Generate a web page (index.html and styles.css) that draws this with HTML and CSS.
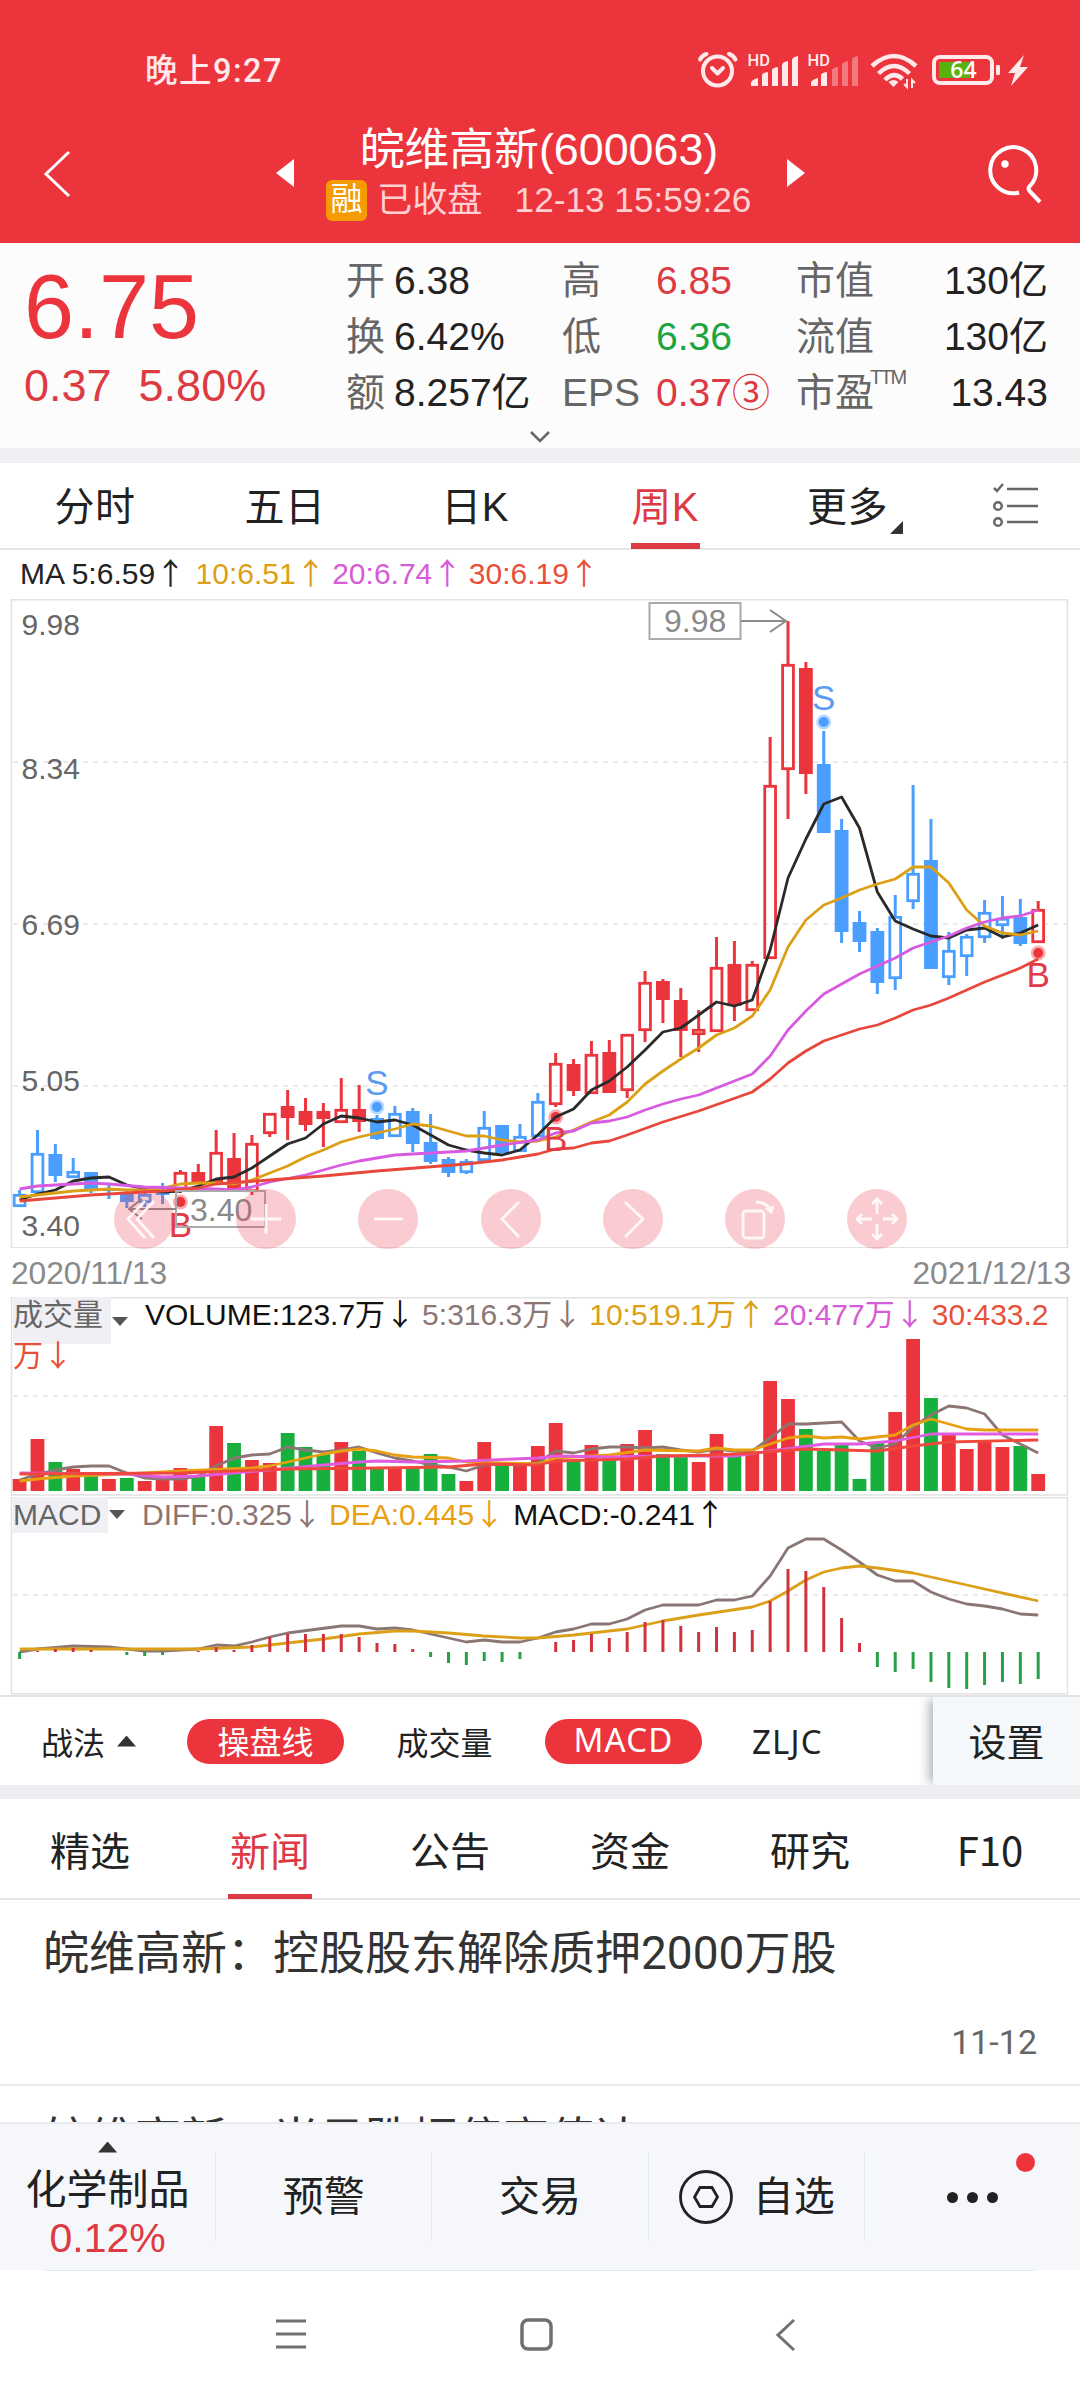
FILE: index.html
```html
<!DOCTYPE html>
<html lang="zh-CN">
<head>
    <meta charset="UTF-8">
    <meta name="viewport" content="width=device-width, initial-scale=1.0">
    <title>皖维高新(600063)</title>
    <link rel="stylesheet" href="styles.css">
</head>
<body>
    <header class="header">
        <div class="status-bar">
            <span class="clock">晚上9:27</span>
            <svg class="status-icons" width="340" height="44" viewBox="690 48 340 44">
                <!-- alarm -->
                <g fill="none" stroke="#ffe9ea" stroke-width="4" stroke-linecap="round" stroke-linejoin="round">
                    <circle cx="717.5" cy="71" r="14.5"/>
                    <path d="M712 68l5.5 5.5L723 68"/>
                    <path d="M700 59.500q2-4 6.500-5.500M729 54q4.500 1.500 6.500 5.500"/>
                </g>
                <!-- signal 1 -->
                <text class="hd" x="747.500" y="66">HD</text>
                <g fill="#ffe9ea">
                    <path d="M751 86v-3q0-3 7-5v8zM762 86V75q0-2 6-3v14zM772 86V70q0-2 6-3v19zM782 86V65q0-3 6-4v25zM792 86V60q0-3 6-4v30z"/>
                </g>
                <!-- signal 2 -->
                <text class="hd" x="807.500" y="66">HD</text>
                <path fill="#ffe9ea" d="M811 86v-3q0-3 7-5v8zM821 86V75q0-2 6-3v14z"/>
                <path fill="#ffe9ea" opacity=".38" d="M832 86V70q0-2 6-3v19zM842 86V65q0-3 6-4v25zM852 86V60q0-3 6-4v30z"/>
                <!-- wifi -->
                <g fill="none" stroke="#ffe9ea" stroke-width="4.500">
                    <path d="M872 66q22-20 44 0M878.500 73.500q15.500-15 31 0M885 80q9-9 17.500 -1"/>
                </g>
                <path fill="#ffe9ea" d="M893.500 87l-5-5q5-4 10 0z"/>
                <path stroke="#ffe9ea" stroke-width="2" fill="none" d="M907 79v8l-3-3M912 88v-8l3 3"/>
                <!-- battery -->
                <rect x="934" y="57" width="58" height="26" rx="6" fill="none" stroke="#ffe9ea" stroke-width="4"/>
                <rect x="939" y="62" width="31" height="16" fill="#55b30c"/>
                <rect x="996" y="65" width="4" height="10" rx="1" fill="#ffe9ea"/>
                <text class="battery-text" x="963.500" y="78">64</text>
                <path fill="#ffe9ea" d="M1024 55l-16 18h7l-4 13 17-19h-8z"/>
            </svg>
        </div>
        <div class="title-bar">
            <svg class="back" width="30" height="52" viewBox="0 0 30 52"><path d="M27 4L4 26l23 22" fill="none" stroke="#fff" stroke-width="3"/></svg>
            <svg class="arrow" width="18" height="28" viewBox="0 0 18 28"><path d="M18 0v28L0 14z" fill="#fff"/></svg>
            <div class="stock">
                <h1 class="stock-name">皖维高新(600063)</h1>
                <p class="stock-state"><span class="tag">融</span><span>已收盘</span><span class="stamp">12-13 15:59:26</span></p>
            </div>
            <svg class="arrow" width="18" height="28" viewBox="0 0 18 28"><path d="M0 0v28l18-14z" fill="#fff"/></svg>
            <svg class="search" width="56" height="56" viewBox="0 0 56 56">
                <path d="M32 47.500A23 23 0 1 1 42.500 41.500Q40 44 44 47.500L53 57" fill="none" stroke="#fff" stroke-width="4"/>
                <circle cx="18" cy="19" r="3.700" fill="#fff"/>
            </svg>
        </div>
    </header>

    <section class="quote">
        <div class="price">
            <div class="price-now">6.75</div>
            <div class="price-change"><span>0.37</span><span>5.80%</span></div>
        </div>
        <div class="figures">
            <span class="label">开</span><span>6.38</span>
            <span class="label">高</span><span class="up">6.85</span>
            <span class="label">市值</span><span class="right">130亿</span>
            <span class="label">换</span><span>6.42%</span>
            <span class="label">低</span><span class="down">6.36</span>
            <span class="label">流值</span><span class="right">130亿</span>
            <span class="label">额</span><span>8.257亿</span>
            <span class="label">EPS</span><span class="up">0.37<span class="circled">③</span></span>
            <span class="label">市盈<sup>TTM</sup></span><span class="right">13.43</span>
        </div>
        <svg class="expand" width="22" height="14" viewBox="0 0 22 14"><path d="M2 2l9 9 9-9" fill="none" stroke="#666" stroke-width="2.500"/></svg>
    </section>

    <nav class="periods">
        <a>分时</a>
        <a>五日</a>
        <a>日K</a>
        <a class="active">周K</a>
        <a class="more">更多</a>
        <svg class="list-icon" width="48" height="46" viewBox="0 0 48 46" fill="none" stroke="#666" stroke-width="2.500">
            <path d="M2 5l3 3 6-7M15 6h31M15 23h31M15 39h31"/>
            <circle cx="6" cy="23" r="3.800"/>
            <circle cx="6" cy="39" r="3.800"/>
        </svg>
    </nav>

    <div class="ma-row">
        <span class="ma5">MA 5:6.59<i class="ar">↑</i></span>
        <span class="ma10">10:6.51<i class="ar">↑</i></span>
        <span class="ma20">20:6.74<i class="ar">↑</i></span>
        <span class="ma30">30:6.19<i class="ar">↑</i></span>
    </div>

    <section class="pane k-pane">
        <svg id="k-chart" width="1080" height="649" viewBox="0 599 1080 649"></svg>
        <div class="tools">
            <button><svg viewBox="0 0 60 60"><path d="M31 12L14 30l17 19M40 12L23 30l17 19"/></svg></button>
            <button><svg viewBox="0 0 60 60"><path d="M15 30h30M30 15v30"/></svg></button>
            <button><svg viewBox="0 0 60 60"><path d="M16 30h29"/></svg></button>
            <button><svg viewBox="0 0 60 60"><path d="M38 13L21 30l17 18"/></svg></button>
            <button><svg viewBox="0 0 60 60"><path d="M22 13l18 17-18 18"/></svg></button>
            <button><svg viewBox="0 0 60 60"><rect x="18" y="22" width="21" height="27" rx="3"/><path d="M31 13q11 0 15 9M41 19l5 4 2-6"/></svg></button>
            <button><svg viewBox="0 0 60 60"><path d="M30 25V11M25 15l5-5 5 5M30 35v14M25 45l5 5 5-5M25 30H11M15 25l-5 5 5 5M36 30h14M45 25l5 5-5 5"/></svg></button>
        </div>
    </section>
    <div class="dates"><span>2020/11/13</span><span>2021/12/13</span></div>

    <section class="pane vol-pane">
        <svg id="vol-chart" width="1080" height="200" viewBox="0 1297 1080 200"></svg>
        <div class="legend">
            <span class="picker">成交量</span><b class="caret"></b>
            <span class="v0">VOLUME:123.7万<i class="ar">↓</i></span>
            <span class="v5">5:316.3万<i class="ar">↓</i></span>
            <span class="ma10">10:519.1万<i class="ar">↑</i></span>
            <span class="ma20">20:477万<i class="ar">↓</i></span>
            <span class="ma30">30:433.2</span>
        </div>
        <div class="legend-wrap ma30">万<i class="ar">↓</i></div>
    </section>

    <section class="pane macd-pane">
        <svg id="macd-chart" width="1080" height="198" viewBox="0 1497 1080 198"></svg>
        <div class="legend">
            <span class="picker">MACD</span><b class="caret"></b>
            <span class="v5">DIFF:0.325<i class="ar">↓</i></span>
            <span class="dea">DEA:0.445<i class="ar">↓</i></span>
            <span class="v0">MACD:-0.241<i class="ar">↑</i></span>
        </div>
    </section>

    <div class="indicators">
        <span class="tactics">战法</span>
        <span class="pill">操盘线</span>
        <span class="plain">成交量</span>
        <span class="pill latin">MACD</span>
        <span class="plain latin last">ZLJC</span>
        <span class="settings">设置</span>
    </div>

    <nav class="info-tabs">
        <a>精选</a>
        <a class="active">新闻</a>
        <a>公告</a>
        <a>资金</a>
        <a>研究</a>
        <a>F10</a>
    </nav>

    <main class="news">
        <article>
            <h2>皖维高新：控股股东解除质押2000万股</h2>
            <time>11-12</time>
        </article>
        <article>
            <h2>皖维高新：当日跌幅偏离值达</h2>
        </article>
    </main>

    <footer class="actions">
        <div class="action sector">
            <i class="tri"></i>
            <span>化学制品</span>
            <span class="pct">0.12%</span>
        </div>
        <div class="action">预警</div>
        <div class="action">交易</div>
        <div class="action watch">
            <svg width="56" height="56" viewBox="0 0 56 56" fill="none" stroke="#222" stroke-width="2.800">
                <circle cx="28" cy="28" r="25.500"/>
                <path d="M22 18.500h12l5.500 9.500-5.500 9.500H22L16.500 28z"/>
            </svg>
            自选
        </div>
        <div class="action dots">
            <i></i><i></i><i></i>
            <b class="badge"></b>
        </div>
    </footer>

    <div class="system-nav">
        <svg width="32" height="34" viewBox="0 0 32 34"><path d="M1 4h30M1 17h30M1 30h30" stroke="#707070" stroke-width="3"/></svg>
        <svg class="home" width="36" height="36" viewBox="0 0 36 36"><rect x="3" y="3" width="29" height="29" rx="6" fill="none" stroke="#707070" stroke-width="3.500"/></svg>
        <svg width="22" height="36" viewBox="0 0 22 36"><path d="M19 3L3 18l16 15" fill="none" stroke="#707070" stroke-width="3"/></svg>
    </div>

    <script src="charts.js"></script>
</body>
</html>
```
FILE: styles.css
```css
* {
    box-sizing: border-box;
    margin: 0;
    padding: 0;
}

body {
    width: 1080px;
    height: 2400px;
    overflow: hidden;
    background: #fff;
    color: #222;
    font-family: "Liberation Sans", "Noto Sans CJK SC", sans-serif;
    display: flex;
    flex-direction: column;
}

i {
    font-style: normal;
}

svg {
    display: block;
    flex: none;
}

/* header */
.header {
    height: 243px;
    background: #eb343c;
    color: #fff;
    flex: none;
}

.status-bar {
    height: 100px;
    padding: 48px 50px 0 145px;
    display: flex;
    justify-content: space-between;
}

.clock {
    font: 500 32.5px/47px Roboto, "Noto Sans CJK SC", sans-serif;
    letter-spacing: 1.5px;
    color: #ffe9ea;
}

.hd {
    font: 500 16.5px Roboto, sans-serif;
    fill: #ffe9ea;
}

.battery-text {
    font: 600 23px "Open Sans", sans-serif;
    fill: #fff;
    text-anchor: middle;
}

.title-bar {
    height: 143px;
    padding: 18px 36px 0 42px;
    display: flex;
    align-items: flex-start;
}

.back {
    margin-top: 30px;
}

.title-bar .arrow {
    margin: 41px 0 0 204px;
}

.stock {
    width: 432px;
    margin: 1px 32px 0 29px;
    text-align: center;
    white-space: nowrap;
}

.title-bar .stock + .arrow {
    margin-left: 0;
}

.stock-name {
    font-size: 44.8px;
    font-weight: 400;
    line-height: 60px;
}

.stock-state {
    display: flex;
    align-items: center;
    line-height: 42px;
    font-size: 35.2px;
    color: #ffd0d2;
    margin-left: 3px;
}

.tag {
    width: 41px;
    height: 41px;
    margin-right: 10px;
    border-radius: 6px;
    background: #f59a00;
    color: #fff;
    font-size: 32px;
    line-height: 39px;
}

.stamp {
    margin-left: 32px;
}

.search {
    margin: 27px 0 0 182px;
    overflow: visible;
}

/* quote */
.quote {
    height: 220px;
    flex: none;
    background: #fcfcfc;
    border-bottom: 15px solid #eeeef3;
    display: grid;
    grid-template-columns: 346px 1fr;
    grid-template-rows: 185px auto;
}

.price {
    padding: 11px 0 0 24px;
    color: #eb343c;
}

.price-now {
    font-size: 90px;
    line-height: 106px;
}

.price-change {
    display: flex;
    gap: 27px;
    font-size: 45px;
    line-height: 52px;
    color: #dd3a44;
}

.figures {
    display: grid;
    grid-template-columns: 48px 168px 94px 140px 99px 153px;
    grid-template-rows: repeat(3, 56px);
    padding-top: 10px;
    font-size: 39px;
    line-height: 56px;
    white-space: nowrap;
}

.label {
    color: #666;
}

.label sup {
    font-size: 20px;
    line-height: 20px;
    vertical-align: 22px;
    margin-left: -4px;
    letter-spacing: -2px;
}

.circled {
    font-size: 38px;
}

.up {
    color: #dd3a44;
}

.down {
    color: #1da541;
}

.right {
    text-align: right;
}

.expand {
    grid-column: 1 / 3;
    justify-self: center;
    margin-top: 2px;
}

/* period tabs */
.periods {
    height: 87px;
    flex: none;
    display: flex;
    border-bottom: 2px solid #e6e6e6;
    font-size: 40px;
    line-height: 89px;
}

.periods a {
    width: 190px;
    height: 85px;
    text-align: center;
    display: flex;
    justify-content: center;
    letter-spacing: 0.5px;
}

.periods .active {
    color: #dd3a44;
}

.periods .active::after {
    content: "";
    position: absolute;
    width: 69px;
    height: 6px;
    margin-top: 80px;
    background: #dd3a44;
}

.periods .more {
    justify-content: flex-start;
    padding-left: 47px;
}

.periods .more::after {
    content: "";
    align-self: flex-end;
    width: 13px;
    height: 13px;
    background: #333;
    clip-path: polygon(100% 0, 100% 100%, 0 100%);
    margin: 0 0 14px 2px;
}

.list-icon {
    margin: 20px 0 0 42px;
}

/* moving average legend */
.ma-row {
    height: 49px;
    flex: none;
    padding-left: 20px;
    display: flex;
    gap: 9.5px;
    font-size: 30px;
    line-height: 48px;
}

.ar {
    display: inline-block;
    width: 27px;
    text-align: center;
    font-family: "Noto Sans CJK SC", sans-serif;
    line-height: 1;
}

.ma-row .ma5 .ar { width: 31px; }

.ma5 { color: #222; }
.ma10 { color: #dc9f16; }
.ma20 { color: #d65bd6; }
.ma30 { color: #e8503a; }
.v0 { color: #111; }
.v5 { color: #8c7673; }
.dea { color: #e8a010; }

/* chart panes */
.pane {
    position: relative;
    flex: none;
}

.k-pane { height: 649px; }
.vol-pane { height: 200px; }
.macd-pane { height: 198px; }

.pane > svg {
    position: absolute;
    left: 0;
    top: 0;
}

.frame {
    fill: none;
    stroke: #e2e2e2;
    stroke-width: 1.5;
}

.grid {
    stroke: #e4e4e4;
    stroke-width: 1.5;
    stroke-dasharray: 5 5;
}

.axis {
    font-size: 30px;
    fill: #666;
}

.note {
    font-size: 32px;
    fill: #8a8a8a;
}

.mark {
    font-size: 35px;
    text-anchor: middle;
}

.line {
    fill: none;
    stroke-width: 2.8;
    stroke-linejoin: round;
}

.tools {
    position: absolute;
    left: 114px;
    bottom: -1px;
    display: flex;
    gap: 62.2px;
}

.tools button {
    width: 60px;
    height: 60px;
    border: 0;
    border-radius: 50%;
    background: rgba(236, 70, 90, 0.28);
}

.tools svg {
    width: 60px;
    height: 60px;
    fill: none;
    stroke: #fff;
    stroke-opacity: 0.85;
    stroke-width: 2.8;
}

.dates {
    height: 49px;
    flex: none;
    display: flex;
    justify-content: space-between;
    padding: 0 9px 0 11px;
    font-size: 31.7px;
    line-height: 50px;
    color: #8a8a8a;
}

.legend {
    position: relative;
    display: flex;
    padding-left: 13px;
    font-size: 30px;
    line-height: 36px;
    white-space: nowrap;
}

.legend > span {
    margin-right: 10px;
}

.legend > .picker {
    color: #666;
    background: #efeff4;
    width: 98px;
    height: 47px;
    margin-right: 1px;
}

.caret {
    width: 16px;
    height: 9px;
    margin: 20px 17px 0 0;
    background: #555;
    clip-path: polygon(0 0, 100% 0, 50% 100%);
}

.legend-wrap {
    position: relative;
    padding-left: 13px;
    margin-top: -6px;
    font-size: 30px;
    line-height: 36px;
}

.macd-pane .picker {
    height: 36px;
    width: 95px;
}

.macd-pane .caret {
    margin-top: 13px;
}

.macd-pane .legend > span + span {
    margin-right: 12px;
}

/* indicator bar */
.indicators {
    height: 104px;
    flex: none;
    display: flex;
    align-items: center;
    border-top: 2px solid #e2e2e2;
    border-bottom: 14px solid #eeeef2;
    padding-left: 41px;
    font-size: 32px;
    line-height: 43px;
    font-family: "Noto Sans CJK SC", sans-serif;
}

.tactics {
    width: 146px;
    display: flex;
    align-items: center;
}

.tactics::after,
.tri {
    content: "";
    width: 19px;
    height: 11px;
    margin-left: 12px;
    background: #333;
    clip-path: polygon(50% 0, 100% 100%, 0 100%);
}

.pill {
    width: 157px;
    height: 45px;
    border-radius: 23px;
    background: #eb343c;
    color: #fff;
    text-align: center;
    line-height: 42px;
}

.plain {
    width: 201px;
    text-align: center;
}

.latin {
    font-family: "Noto Sans", sans-serif;
    font-size: 33px;
    letter-spacing: 1.2px;
}

.plain.last {
    width: 231px;
    padding-left: 50px;
    text-align: left;
}

.settings {
    flex: 1;
    align-self: stretch;
    background: #f5f8fb;
    box-shadow: -6px 0 10px -2px rgba(0, 0, 0, 0.3);
    clip-path: inset(0 0 0 -20px);
    font-size: 38px;
    line-height: 85px;
    text-align: center;
}

/* info tabs */
.info-tabs {
    height: 101px;
    flex: none;
    display: flex;
    border-bottom: 2px solid #e6e6e6;
    font: 40px/101px "Noto Sans CJK SC", sans-serif;
}

.info-tabs a {
    width: 180px;
    display: flex;
    justify-content: center;
}

.info-tabs .active {
    color: #dd3a44;
}

.info-tabs .active::after {
    content: "";
    position: absolute;
    width: 84px;
    height: 5px;
    margin-top: 95px;
    background: #dd3a44;
}

/* news */
.news {
    height: 222px;
    flex: none;
    overflow: hidden;
}

.news article {
    height: 186px;
    border-bottom: 2px solid #eaeaea;
    padding: 19px 43px 0 43px;
    color: #333;
}

.news h2 {
    font: 400 46px/68px Roboto, "Noto Sans CJK SC", sans-serif;
}

.news time {
    display: block;
    margin-top: 32px;
    text-align: right;
    font: 34px/46px Roboto, sans-serif;
    color: #666;
}

/* bottom bar */
.actions {
    height: 148px;
    flex: none;
    display: flex;
    align-items: center;
    background: #f5f7fa;
    border-top: 2px solid #e9ebee;
    font-size: 41px;
    line-height: 52px;
}

.action {
    flex: 1;
    height: 88px;
    display: flex;
    align-items: center;
    justify-content: center;
    border-right: 1px solid #e4eaf0;
}

.sector {
    flex-direction: column;
}

.tri {
    flex: none;
    margin: 6px 0 11px;
}

.sector span {
    line-height: 53px;
}

.sector .pct {
    line-height: 42px;
    color: #dd3a44;
}

.watch {
    gap: 19px;
}

.dots {
    position: relative;
    gap: 9px;
    border: 0;
}

.dots i {
    width: 11px;
    height: 11px;
    border-radius: 50%;
    background: #222;
}

.badge {
    position: absolute;
    right: 45px;
    top: 0;
    width: 19px;
    height: 19px;
    border-radius: 50%;
    background: #f0323c;
}

/* android navigation keys */
.system-nav {
    flex: 1;
    display: flex;
    margin: 0 45px;
    padding: 46px 0 0 230px;
    border-top: 1px solid #dfe6ee;
}

.system-nav .home {
    margin: 0 220px 0 212px;
}
```
FILE: charts.js
```js
const RED = '#eb343c', BLUE = '#4a9eff', GREEN = '#18b03c';
const x = i => 19.6 + i * 17.87;

// type, wick top, body top, body bottom, wick bottom
// R/B = red or blue body filled, r/b = hollow
const candles = [
    ['b', 1190, 1194, 1207, 1207], ['b', 1130, 1153, 1193, 1193], ['B', 1144, 1154, 1176, 1182], ['b', 1158, 1171, 1178, 1178],
    ['B', 1172, 1172, 1190, 1193], ['B', 1183, 1188, 1191, 1199], ['B', 1190, 1192, 1202, 1208], ['b', 1192, 1194, 1203, 1207],
    ['B', 1183, 1192, 1195, 1204], ['r', 1170, 1172, 1190, 1193], ['R', 1164, 1172, 1184, 1184], ['r', 1130, 1152, 1182, 1182],
    ['R', 1133, 1158, 1190, 1190], ['r', 1135, 1143, 1192, 1195], ['r', 1113, 1113, 1134, 1137], ['R', 1090, 1106, 1118, 1140],
    ['R', 1098, 1111, 1125, 1131], ['R', 1103, 1111, 1119, 1147], ['r', 1078, 1109, 1123, 1123], ['R', 1085, 1109, 1122, 1132],
    ['B', 1115, 1118, 1139, 1140], ['b', 1106, 1113, 1137, 1137], ['B', 1108, 1111, 1144, 1152], ['B', 1114, 1142, 1162, 1164],
    ['B', 1157, 1159, 1173, 1177], ['b', 1159, 1161, 1173, 1174], ['b', 1111, 1127, 1161, 1161], ['B', 1125, 1125, 1153, 1153],
    ['b', 1124, 1136, 1152, 1152], ['b', 1093, 1101, 1137, 1137], ['r', 1053, 1063, 1105, 1107], ['R', 1059, 1064, 1091, 1096],
    ['r', 1041, 1054, 1094, 1094], ['R', 1040, 1052, 1093, 1093], ['r', 1034, 1034, 1091, 1098], ['r', 971, 982, 1031, 1042],
    ['R', 979, 981, 1000, 1023], ['R', 988, 1000, 1031, 1057], ['r', 1010, 1029, 1035, 1052], ['r', 937, 967, 1032, 1032],
    ['R', 941, 964, 1006, 1021], ['r', 961, 964, 1011, 1011], ['r', 737, 785, 959, 959], ['r', 621, 664, 770, 819],
    ['R', 662, 668, 774, 794], ['B', 731, 764, 833, 833], ['B', 819, 830, 932, 943], ['B', 911, 922, 942, 952],
    ['B', 928, 931, 983, 994], ['b', 895, 916, 979, 990], ['b', 785, 873, 902, 909], ['B', 819, 860, 969, 969],
    ['b', 932, 950, 978, 985], ['b', 934, 936, 957, 976], ['b', 900, 912, 938, 943], ['b', 896, 918, 926, 939],
    ['B', 899, 917, 944, 946], ['r', 901, 909, 943, 943]
];

const ma5 = [1200, 1194, 1190, 1181, 1178, 1177, 1185, 1189, 1192, 1191, 1186, 1179, 1177, 1168, 1156, 1144, 1138, 1124, 1116, 1118,
    1122, 1120, 1125, 1135, 1145, 1150, 1153, 1155, 1150, 1135, 1117, 1109, 1090, 1081, 1067, 1050, 1032, 1028, 1015, 1002,
    1006, 1000, 950, 878, 839, 804, 797, 828, 892, 921, 929, 936, 938, 930, 928, 937, 933, 925];
const ma10 = [1197, 1195, 1193, 1191, 1190, 1189, 1190, 1190, 1188, 1184, 1183, 1183, 1184, 1180, 1173, 1166, 1157, 1150, 1142, 1137,
    1133, 1129, 1124, 1126, 1131, 1136, 1136, 1140, 1142, 1141, 1137, 1130, 1122, 1115, 1102, 1084, 1071, 1059, 1048, 1035,
    1028, 1016, 990, 947, 920, 905, 898, 890, 884, 879, 867, 867, 883, 910, 926, 933, 935, 931];
// sparse series: [index, y]
const ma20 = [[0, 1189], [1, 1186], [4, 1183], [5, 1184], [7, 1187], [11, 1189], [12, 1190], [13, 1187], [14, 1182], [16, 1175], [17, 1170],
    [18, 1165], [19, 1161], [21, 1155], [23, 1153], [25, 1151], [27, 1145], [29, 1140], [30, 1133], [31, 1131], [32, 1123], [33, 1121],
    [34, 1117], [35, 1110], [36, 1104], [37, 1099], [38, 1095], [39, 1088], [41, 1074], [42, 1056], [43, 1030], [44, 1011], [45, 994],
    [46, 984], [47, 974], [48, 966], [49, 958], [50, 948], [51, 942], [52, 936], [53, 928], [54, 922], [55, 918], [56, 916], [57, 910]];
const ma30 = [[0, 1201], [4, 1195], [8, 1191], [10, 1188], [11, 1184], [14, 1180], [17, 1176], [20, 1171], [25, 1164], [27, 1160], [29, 1154],
    [30, 1149], [31, 1148], [32, 1143], [33, 1141], [34, 1135], [36, 1122], [38, 1111], [41, 1092], [42, 1079], [43, 1063], [44, 1051],
    [45, 1041], [46, 1035], [47, 1029], [48, 1025], [49, 1018], [50, 1010], [51, 1005], [52, 998], [54, 982], [56, 968], [57, 959]];

const volumes = 'r1479 r1439 g1462 r1469 g1476 r1479 g1478 r1481 r1479 r1468 g1476 r1426 g1443 r1460 r1463 g1433 g1447 g1454 r1442 g1451 ' +
    'g1468 r1469 g1469 g1454 g1474 r1481 r1442 g1465 r1466 r1446 r1423 g1460 r1445 g1459 r1444 r1430 g1454 g1456 r1462 r1434 ' +
    'g1456 r1453 r1381 r1399 g1429 g1451 g1445 g1479 g1443 r1412 r1339 g1398 r1434 r1449 r1442 r1447 g1446 r1474';
const vol5 = [1480, 1474, 1470, 1467, 1466, 1466, 1473, 1478, 1479, 1479, 1476, 1466, 1458, 1455, 1454, 1447, 1450, 1452, 1450, 1447,
    1453, 1458, 1461, 1465, 1467, 1471, 1465, 1464, 1465, 1463, 1451, 1453, 1449, 1447, 1447, 1448, 1447, 1450, 1452, 1449,
    1451, 1451, 1438, 1424, 1424, 1423, 1422, 1441, 1448, 1444, 1427, 1415, 1406, 1408, 1414, 1435, 1444, 1453];
const vol10 = [[0, 1481], [1, 1479], [3, 1476], [6, 1474], [9, 1471], [13, 1468], [14, 1466], [15, 1462], [16, 1458], [17, 1454], [18, 1451],
    [19, 1449], [20, 1451], [21, 1455], [22, 1457], [24, 1458], [25, 1462], [29, 1464], [30, 1458], [33, 1455], [35, 1450], [38, 1451],
    [39, 1448], [40, 1450], [41, 1450], [42, 1444], [43, 1438], [44, 1436], [45, 1438], [46, 1437], [47, 1439], [49, 1435], [50, 1425],
    [51, 1419], [52, 1424], [53, 1429], [54, 1430], [57, 1430]];
const vol20 = [[0, 1473], [6, 1474], [8, 1477], [10, 1476], [14, 1470], [17, 1465], [19, 1462], [20, 1461], [22, 1462], [25, 1461], [29, 1458],
    [30, 1456], [33, 1457], [36, 1456], [40, 1456], [42, 1451], [45, 1444], [47, 1444], [49, 1441], [51, 1434], [53, 1434], [57, 1434]];
const vol30 = [[0, 1474], [9, 1473], [15, 1469], [20, 1468], [24, 1467], [26, 1464], [29, 1465], [30, 1461], [34, 1459], [36, 1456], [39, 1455],
    [41, 1453], [44, 1449], [48, 1451], [50, 1446], [52, 1442], [57, 1440]];

// bar ends, zero line is 1652
const macd = [1659, 1651, 1649, 1648, 1650, 0, 1655, 1656, 1655, 0, 1651, 1647, 1650, 1645, 1637, 1634, 1634, 1634, 1634, 1637,
    1643, 1644, 1649, 1657, 1663, 1665, 1661, 1662, 1659, 0, 1642, 1640, 1634, 1638, 1632, 1622, 1620, 1626, 1632, 1627,
    1632, 1630, 1601, 1569, 1571, 1587, 1618, 1643, 1667, 1672, 1669, 1682, 1688, 1689, 1685, 1682, 1684, 1679];
const diff = [[0, 1652], [1, 1649], [3, 1646], [5, 1647], [7, 1651], [8, 1651], [10, 1649], [11, 1645], [12, 1646], [13, 1642], [14, 1637],
    [15, 1633], [18, 1626], [19, 1626], [20, 1629], [21, 1628], [22, 1630], [23, 1634], [24, 1638], [25, 1642], [26, 1640], [27, 1642],
    [28, 1642], [29, 1638], [30, 1632], [31, 1629], [32, 1624], [33, 1624], [34, 1619], [35, 1610], [36, 1605], [38, 1605], [39, 1600],
    [40, 1600], [41, 1596], [42, 1576], [43, 1548], [44, 1539], [45, 1539], [46, 1550], [47, 1562], [48, 1575], [49, 1581], [50, 1581],
    [51, 1592], [52, 1599], [53, 1604], [54, 1606], [55, 1609], [56, 1614], [57, 1615]];
const dea = [[0, 1649], [10, 1649], [13, 1647], [14, 1645], [17, 1639], [19, 1634], [21, 1631], [22, 1631], [24, 1633], [26, 1636], [28, 1638],
    [29, 1638], [31, 1635], [34, 1629], [36, 1621], [38, 1615], [41, 1607], [42, 1601], [43, 1591], [44, 1580], [45, 1572], [46, 1568],
    [47, 1566], [48, 1568], [50, 1573], [53, 1585], [57, 1601]];

function line(data, color) {
    const pts = data.map((d, i) => Array.isArray(d) ? `${x(d[0])},${d[1]}` : `${x(i)},${d}`);
    return `<polyline class="line" points="${pts.join(' ')}" stroke="${color}"/>`;
}

function grid(y) {
    return `<line class="grid" x1="13" x2="1067" y1="${y}" y2="${y}"/>`;
}

function dot(i, y, color) {
    return `<circle cx="${x(i)}" cy="${y}" r="7.500" fill="${color}" opacity=".4"/><circle cx="${x(i)}" cy="${y}" r="5" fill="${color}"/>`;
}

function mark(i, y, text, color) {
    return `<text class="mark" x="${x(i)}" y="${y}" fill="${color}">${text}</text>`;
}

// K line
let k = '<rect class="frame" x="11.500" y="599.750" width="1056" height="648"/>' + grid(762) + grid(924) + grid(1086);
candles.forEach(([t, hi, top, bot, lo], i) => {
    const color = t.toLowerCase() === 'r' ? RED : BLUE;
    k += `<path d="M${x(i)} ${hi}V${top}M${x(i)} ${bot}V${lo}" stroke="${color}" stroke-width="3"/>`;
    if (t === 'r' || t === 'b') {
        k += `<rect x="${x(i) - 5.4}" y="${top + 1.3}" width="10.800" height="${bot - top - 2.6}" fill="none" stroke="${color}" stroke-width="2.800"/>`;
    } else {
        k += `<rect x="${x(i) - 6.9}" y="${top}" width="13.800" height="${bot - top}" fill="${color}"/>`;
    }
});
k += dot(9, 1202, RED) + dot(20, 1107, BLUE) + dot(30, 1117, RED) + dot(45, 722, BLUE) + dot(57, 953, RED);
k += line(ma5, '#2a2a2a') + line(ma10, '#dc9f16') + line(ma20, '#d65be0') + line(ma30, '#e8483c');
k += mark(9, 1237, 'B', '#e23a48') + mark(20, 1095, 'S', '#5c9cf0') + mark(30, 1151, 'B', '#e23a48') +
    mark(45, 710, 'S', '#5c9cf0') + mark(57, 987, 'B', '#e23a48');
[[635, '9.98'], [779, '8.34'], [935, '6.69'], [1091, '5.05'], [1236, '3.40']].forEach(([y, t]) => {
    k += `<text class="axis" x="21.500" y="${y}">${t}</text>`;
});
k += '<g fill="none" stroke="#8a8a8a" stroke-width="2"><rect x="649.500" y="603" width="91" height="36" stroke="#aaa"/>' +
    '<path d="M741 621h45M770 610l16 11-16 11"/><rect x="176" y="1191" width="89" height="36" stroke="#aaa"/><path d="M176 1209h-45M142 1199l-13 10 13 10"/></g>' +
    '<text class="note" x="664" y="632">9.98</text><text class="note" x="190" y="1221">3.40</text>';
document.getElementById('k-chart').innerHTML = k;

// volume
let v = '<path class="frame" d="M11.500 1495V1297.750H1067.500V1495z"/>' + grid(1396);
volumes.split(' ').forEach((s, i) => {
    const y = +s.slice(1);
    v += `<rect x="${x(i) - 6.9}" y="${y}" width="13.800" height="${1491 - y}" fill="${s[0] === 'r' ? RED : GREEN}"/>`;
});
v += line(vol5, '#8c7673') + line(vol10, '#e8a010') + line(vol20, '#e05be0') + line(vol30, '#f0483c');
document.getElementById('vol-chart').innerHTML = v;

// MACD
let m = '<rect class="frame" x="11.500" y="1497.750" width="1056" height="196"/>' + grid(1595);
m += line(diff, '#8a7674') + line(dea, '#dca018');
macd.forEach((y, i) => {
    if (y) m += `<path d="M${x(i)} 1652V${y}" stroke="${y < 1652 ? '#d0323e' : '#28a048'}" stroke-width="3"/>`;
});
document.getElementById('macd-chart').innerHTML = m;
```
